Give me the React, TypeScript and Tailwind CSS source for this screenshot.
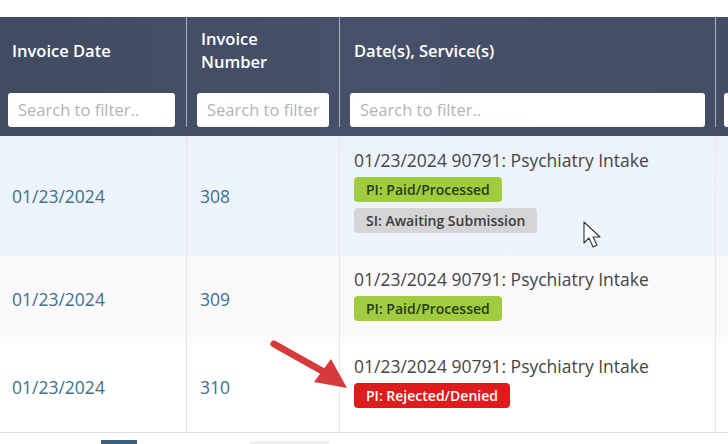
import React from "react";

const font = { fontFamily: '"Open Sans", "Noto Sans", sans-serif' };

function Badge({ kind, children }: { kind: "green" | "gray" | "red"; children: React.ReactNode }) {
  const cls =
    kind === "green"
      ? "bg-[#9fcd3f] text-[#2c3a14]"
      : kind === "gray"
      ? "bg-[#d5d5d5] text-[#3b3b3b]"
      : "bg-[#df1b1b] text-white";
  return (
    <div className={`inline-flex h-[25px] items-center rounded-[4px] px-[12px] text-[14px] font-semibold leading-none ${cls}`}>
      {children}
    </div>
  );
}

function HeaderCell({ w, pad, title, placeholder }: { w: string; pad: string; title: React.ReactNode; placeholder: string }) {
  return (
    <div className={`flex shrink-0 flex-col border-r border-[#aab2c0] ${w} ${pad}`}>
      <div className="flex h-[66px] items-center px-[4px] text-[16.5px] font-semibold leading-[23px] text-white">{title}</div>
      <div className="mt-[10px] flex h-[34px] items-center rounded-[3px] bg-white pl-[10px] text-[16.5px] text-[#b3b3b3]">
        {placeholder}
      </div>
    </div>
  );
}

function Row({ h, bg, pt, num, badges }: { h: string; bg: string; pt: string; num: string; badges: React.ReactNode }) {
  return (
    <div className={`flex ${h} ${bg}`}>
      <div className="flex w-[187px] shrink-0 items-center border-r border-[#e4e6ea] pl-[12px] text-[17.5px] text-[#3d7189]">01/23/2024</div>
      <div className="flex w-[153px] shrink-0 items-center border-r border-[#e4e6ea] pl-[13px] text-[17.5px] text-[#3d7189]">{num}</div>
      <div className={`flex w-[376px] shrink-0 flex-col items-start border-r border-[#e4e6ea] pl-[14px] ${pt}`}>
        <div className="text-[17.5px] leading-[22px] text-[#454545]">01/23/2024 90791: Psychiatry Intake</div>
        <div className="mt-[6px] flex flex-col items-start gap-[6px]">{badges}</div>
      </div>
      <div className="flex-1"></div>
    </div>
  );
}

export default function App() {
  return (
    <div className="relative h-[444px] w-[728px] overflow-hidden bg-white" style={font}>
      <div className="h-[17px] bg-white"></div>
      <div className="flex h-[119px] bg-gradient-to-r from-[#414b61] via-[#465169] to-[#434d64] pb-[9px]">
        <HeaderCell w="w-[187px]" pad="pl-[8px] pr-[11px]" title="Invoice Date" placeholder="Search to filter.." />
        <HeaderCell w="w-[153px]" pad="px-[10px]" title={<span>Invoice<br />Number</span>} placeholder="Search to filter" />
        <HeaderCell w="w-[376px]" pad="px-[10px]" title="Date(s), Service(s)" placeholder="Search to filter.." />
        <div className="flex flex-1 flex-col pl-[8px]">
          <div className="h-[66px]"></div>
          <div className="mt-[10px] h-[34px] w-[200px] rounded-[3px] bg-white"></div>
        </div>
      </div>
      <Row
        h="h-[120px]"
        bg="bg-gradient-to-b from-[#edf3fb] to-[#eef4fb]"
        pt="pt-[13px]"
        num="308"
        badges={
          <>
            <Badge kind="green">PI: Paid/Processed</Badge>
            <Badge kind="gray">SI: Awaiting Submission</Badge>
          </>
        }
      />
      <Row h="h-[87px]" bg="bg-[#fbf9fc]" pt="pt-[12px]" num="309" badges={<Badge kind="green">PI: Paid/Processed</Badge>} />
      <Row h="h-[89px]" bg="bg-white" pt="pt-[12px]" num="310" badges={<Badge kind="red">PI: Rejected/Denied</Badge>} />
      <div className="relative h-[12px] border-t border-[#dcdcdc] bg-white">
        <div className="absolute left-[101px] top-[7px] h-[10px] w-[36px] bg-[#3b5f78]"></div>
        <div className="absolute left-[250px] top-[8px] h-[10px] w-[80px] rounded-[2px] bg-[#f0f0f2]"></div>
      </div>

      <svg className="absolute left-0 top-0" width="728" height="444" viewBox="0 0 728 444">
        <line x1="274" y1="344" x2="324" y2="372" stroke="#d63b3b" strokeWidth="7" strokeLinecap="round" />
        <polygon points="347,388 331,359 314,382" fill="#d63b3b" />
        <path
          d="M584 222 L584 243 L589 238 L593 247 L597 245 L593 237 L600 237 Z"
          fill="white"
          stroke="#333"
          strokeWidth="1.1"
          strokeLinejoin="round"
        />
      </svg>
    </div>
  );
}
